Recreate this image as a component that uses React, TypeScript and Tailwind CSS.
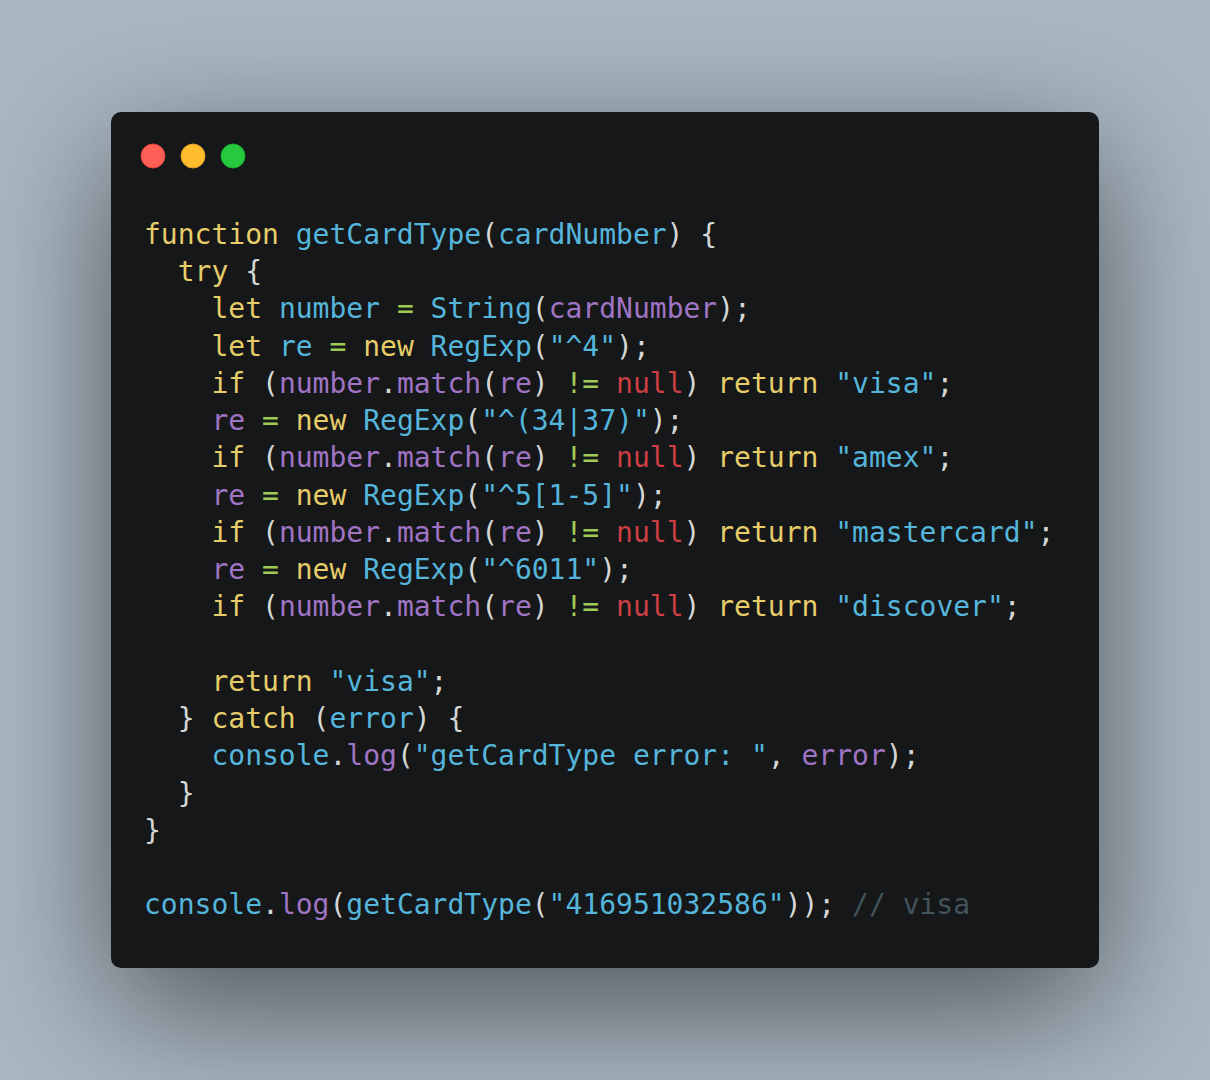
import React from "react";

type Tok = [string, string];

const K = "text-[#e6cd69]"; // keyword
const B = "text-[#55b5db]"; // def / string
const P = "text-[#a074c4]"; // variable
const R = "text-[#cd3f45]"; // null
const G = "text-[#9fca56]"; // operator
const D = "text-[#d4d7d6]"; // punctuation
const C = "text-[#41535b]"; // comment

const lines: Tok[][] = [
  [[K, "function"], [D, " "], [B, "getCardType"], [D, "("], [B, "cardNumber"], [D, ") {"]],
  [[D, "  "], [K, "try"], [D, " {"]],
  [[D, "    "], [K, "let"], [D, " "], [B, "number"], [D, " "], [G, "="], [D, " "], [B, "String"], [D, "("], [P, "cardNumber"], [D, ");"]],
  [[D, "    "], [K, "let"], [D, " "], [B, "re"], [D, " "], [G, "="], [D, " "], [K, "new"], [D, " "], [B, "RegExp"], [D, "("], [B, "\"^4\""], [D, ");"]],
  [[D, "    "], [K, "if"], [D, " ("], [P, "number"], [D, "."], [P, "match"], [D, "("], [P, "re"], [D, ") "], [G, "!="], [D, " "], [R, "null"], [D, ") "], [K, "return"], [D, " "], [B, "\"visa\""], [D, ";"]],
  [[D, "    "], [P, "re"], [D, " "], [G, "="], [D, " "], [K, "new"], [D, " "], [B, "RegExp"], [D, "("], [B, "\"^(34|37)\""], [D, ");"]],
  [[D, "    "], [K, "if"], [D, " ("], [P, "number"], [D, "."], [P, "match"], [D, "("], [P, "re"], [D, ") "], [G, "!="], [D, " "], [R, "null"], [D, ") "], [K, "return"], [D, " "], [B, "\"amex\""], [D, ";"]],
  [[D, "    "], [P, "re"], [D, " "], [G, "="], [D, " "], [K, "new"], [D, " "], [B, "RegExp"], [D, "("], [B, "\"^5[1-5]\""], [D, ");"]],
  [[D, "    "], [K, "if"], [D, " ("], [P, "number"], [D, "."], [P, "match"], [D, "("], [P, "re"], [D, ") "], [G, "!="], [D, " "], [R, "null"], [D, ") "], [K, "return"], [D, " "], [B, "\"mastercard\""], [D, ";"]],
  [[D, "    "], [P, "re"], [D, " "], [G, "="], [D, " "], [K, "new"], [D, " "], [B, "RegExp"], [D, "("], [B, "\"^6011\""], [D, ");"]],
  [[D, "    "], [K, "if"], [D, " ("], [P, "number"], [D, "."], [P, "match"], [D, "("], [P, "re"], [D, ") "], [G, "!="], [D, " "], [R, "null"], [D, ") "], [K, "return"], [D, " "], [B, "\"discover\""], [D, ";"]],
  [[D, " "]],
  [[D, "    "], [K, "return"], [D, " "], [B, "\"visa\""], [D, ";"]],
  [[D, "  } "], [K, "catch"], [D, " ("], [B, "error"], [D, ") {"]],
  [[D, "    "], [B, "console"], [D, "."], [P, "log"], [D, "("], [B, "\"getCardType error: \""], [D, ", "], [P, "error"], [D, ");"]],
  [[D, "  }"]],
  [[D, "}"]],
  [[D, " "]],
  [[B, "console"], [D, "."], [P, "log"], [D, "("], [B, "getCardType"], [D, "("], [B, "\"416951032586\""], [D, ")); "], [C, "// visa"]],
];

export default function App() {
  return (
    <div className="w-[1210px] h-[1080px] bg-[#abb8c3] flex items-center justify-center">
      <div className="w-[988px] h-[856px] bg-[#151718] rounded-[10px] shadow-[0_40px_136px_rgba(0,0,0,0.55)] flex flex-col">
        <div className="flex gap-[14px] pl-[29px] pt-[31px]">
          <svg width="26" height="26" viewBox="0 0 26 26">
            <circle cx="13" cy="13" r="12" fill="#FF5F56" stroke="#E0443E" strokeWidth="1" />
          </svg>
          <svg width="26" height="26" viewBox="0 0 26 26">
            <circle cx="13" cy="13" r="12" fill="#FFBD2E" stroke="#DEA123" strokeWidth="1" />
          </svg>
          <svg width="26" height="26" viewBox="0 0 26 26">
            <circle cx="13" cy="13" r="12" fill="#27C93F" stroke="#1AAB29" strokeWidth="1" />
          </svg>
        </div>
        <div
          className="mt-[47px] pl-[33px] pr-[34px] text-[28px] leading-[37.24px] whitespace-pre"
          style={{ fontFamily: '"DejaVu Sans Mono", "Liberation Mono", monospace' }}
        >
          {lines.map((line, i) => (
            <div key={i}>
              {line.map(([cls, text], j) => (
                <span key={j} className={cls}>
                  {text}
                </span>
              ))}
            </div>
          ))}
        </div>
      </div>
    </div>
  );
}
